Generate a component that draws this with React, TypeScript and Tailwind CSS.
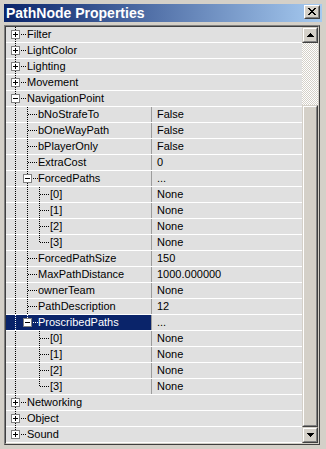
import React from "react";

type Row = {
  name: string;
  depth: 1 | 2 | 3;
  value?: string;
  box?: "+" | "-";
  last?: boolean;
  selected?: boolean;
  // depth 3 only: does the parent's branch go on below
  under?: boolean;
};

const rows: Row[] = [
  {name: "Filter", depth: 1, box: "+"},
  {name: "LightColor", depth: 1, box: "+"},
  {name: "Lighting", depth: 1, box: "+"},
  {name: "Movement", depth: 1, box: "+"},
  {name: "NavigationPoint", depth: 1, box: "-"},
  {name: "bNoStrafeTo", depth: 2, value: "False"},
  {name: "bOneWayPath", depth: 2, value: "False"},
  {name: "bPlayerOnly", depth: 2, value: "False"},
  {name: "ExtraCost", depth: 2, value: "0"},
  {name: "ForcedPaths", depth: 2, box: "-", value: "..."},
  {name: "[0]", depth: 3, value: "None", under: true},
  {name: "[1]", depth: 3, value: "None", under: true},
  {name: "[2]", depth: 3, value: "None", under: true},
  {name: "[3]", depth: 3, value: "None", under: true, last: true},
  {name: "ForcedPathSize", depth: 2, value: "150"},
  {name: "MaxPathDistance", depth: 2, value: "1000.000000"},
  {name: "ownerTeam", depth: 2, value: "None"},
  {name: "PathDescription", depth: 2, value: "12"},
  {name: "ProscribedPaths", depth: 2, box: "-", value: "...", last: true, selected: true},
  {name: "[0]", depth: 3, value: "None"},
  {name: "[1]", depth: 3, value: "None"},
  {name: "[2]", depth: 3, value: "None"},
  {name: "[3]", depth: 3, value: "None", last: true},
  {name: "Networking", depth: 1, box: "+"},
  {name: "Object", depth: 1, box: "+"},
  {name: "Sound", depth: 1, box: "+", last: true},
];

const lineX = {1: 9, 2: 21, 3: 33};
const textX = {1: 21, 2: 32, 3: 44};

const vdots = (x: number, y0: number, y1: number) => {
  const out = [];
  for (let y = y0; y < y1; y += 2) out.push(<rect key={`v${x}-${y}`} x={x} y={y} width={1} height={1}/>);
  return out;
};

const hdots = (x0: number, x1: number, y: number) => {
  const out = [];
  for (let x = x0; x <= x1; x += 2) out.push(<rect key={`h${x}-${y}`} x={x} y={y} width={1} height={1}/>);
  return out;
};

const TreeGuides = ({row}: {row: Row}) => {
  const w = textX[row.depth];
  const cx = lineX[row.depth];
  const dots = [];
  if (row.depth > 1) dots.push(...vdots(lineX[1], 0, 16));
  if (row.depth === 3 && row.under) dots.push(...vdots(lineX[2], 0, 16));
  if (row.box) {
    dots.push(...vdots(cx, 0, 3));
    if (!row.last) dots.push(...vdots(cx, 12, 16));
    dots.push(...hdots(cx + 6, w - 1, 7));
  } else {
    dots.push(...vdots(cx, 0, row.last ? 8 : 16));
    dots.push(...hdots(cx + 1, w - 1, 7));
  }
  return (
    <svg width={w} height={15} className="shrink-0" shapeRendering="crispEdges">
      <g fill={row.selected ? "#ffffff" : "#000000"}>{dots}</g>
      {row.box && (
        <g>
          <rect x={cx - 3.5} y={3.5} width={8} height={8} fill="#ffffff" stroke="#808080"/>
          <rect x={cx - 2} y={7} width={5} height={1} fill="#000000"/>
          {row.box === "+" && <rect x={cx} y={5} width={1} height={5} fill="#000000"/>}
        </g>
      )}
    </svg>
  );
};

const PropRow = ({row}: {row: Row}) => {
  const isGroup = row.depth === 1;
  return (
    <div className="flex h-[16px] border-b border-white bg-[#e0e0e0]">
      <div
        className={`flex items-start whitespace-nowrap ${isGroup ? "flex-1" : "w-[146px] border-r border-[#9c9c9c]"} ${row.selected ? "bg-[#0a246a] text-white" : "text-black"}`}
      >
        <TreeGuides row={row}/>
        <span>{row.name}</span>
      </div>
      {!isGroup && <div className="flex-1 pl-[5px] text-black whitespace-nowrap">{row.value}</div>}
    </div>
  );
};

const Raised = ({className, children}: {className: string; children?: React.ReactNode}) => (
  <div className={`border border-t-[#d4d0c8] border-l-[#d4d0c8] border-r-[#404040] border-b-[#404040] bg-[#d4d0c8] ${className}`}>
    <div className="h-full w-full border border-t-white border-l-white border-r-[#808080] border-b-[#808080] flex items-center justify-center">
      {children}
    </div>
  </div>
);

const ScrollBar = () => (
  <div className="w-[16px] flex flex-col">
    <Raised className="h-[16px] shrink-0">
      <svg width={7} height={4} className="mb-[1px]" shapeRendering="crispEdges">
        <polygon points="3.5,0 7,4 0,4" fill="#000"/>
      </svg>
    </Raised>
    <div className="h-[62px] shrink-0 bg-[repeating-conic-gradient(#d4d0c8_0_25%,#ffffff_0_50%)] bg-[length:2px_2px]"/>
    <Raised className="flex-1"/>
    <Raised className="h-[16px] shrink-0">
      <svg width={7} height={4} shapeRendering="crispEdges">
        <polygon points="0,0 7,0 3.5,4" fill="#000"/>
      </svg>
    </Raised>
  </div>
);

const CloseGlyph = () => {
  // classic 8x7 caption cross
  const px = [
    "XX....XX",
    ".XX..XX.",
    "..XXXX..",
    "...XX...",
    "..XXXX..",
    ".XX..XX.",
    "XX....XX",
  ];
  const cells = [];
  px.forEach((line, y) => line.split("").forEach((c, x) => {
    if (c === "X") cells.push(<rect key={`${x}-${y}`} x={x} y={y} width={1} height={1}/>);
  }));
  return <svg width={8} height={7} shapeRendering="crispEdges" fill="#000">{cells}</svg>;
};

export default function App() {
  return (
    <div className="w-[326px] h-[449px] bg-[#d4d0c8] flex flex-col pl-[4px] pt-[4px] font-['Liberation_Sans',Arial,sans-serif] text-[11px] leading-[15px]">
      <div className="w-[318px] h-[18px] flex items-start justify-between pl-[2px] pr-[2px] bg-[linear-gradient(to_right,#0a246a,#a6caf0)]">
        <span className="text-white font-bold text-[14px] leading-[18px]">PathNode Properties</span>
        <div className="mt-[1px] w-[16px] h-[14px] border border-t-white border-l-white border-r-[#404040] border-b-[#404040] bg-[#d4d0c8]">
          <div className="h-full w-full border border-t-[#d4d0c8] border-l-[#d4d0c8] border-r-[#808080] border-b-[#808080] flex items-center justify-center pb-[1px]">
            <CloseGlyph/>
          </div>
        </div>
      </div>
      <div className="mt-[3px] w-[316px] h-[420px] border border-t-[#808080] border-l-[#808080] border-r-[#404040] border-b-[#404040]">
        <div className="h-full w-full flex border border-t-[#404040] border-l-[#404040] border-r-[#d4d0c8] border-b-[#d4d0c8]">
          <div className="w-[296px] flex flex-col">
            {rows.map((row, i) => <PropRow key={i} row={row}/>)}
          </div>
          <ScrollBar/>
        </div>
      </div>
    </div>
  );
}
